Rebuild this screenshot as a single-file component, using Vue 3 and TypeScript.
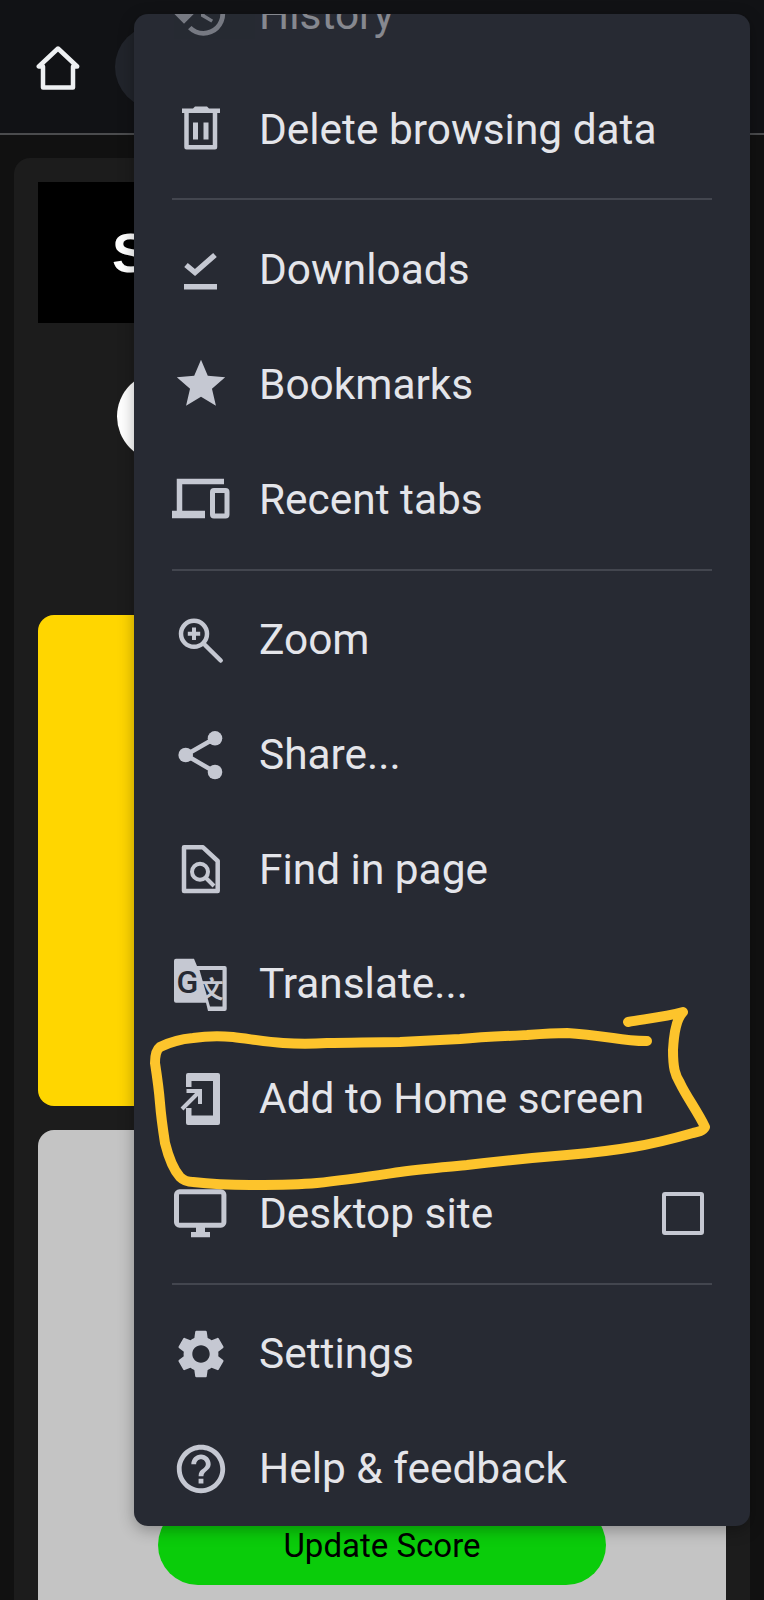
<template>
  <div class="screen">
    <header class="topbar">
      <svg class="home" width="44" height="44" viewBox="0 0 44 44">
        <path d="M22 2.5 2.8 20.5H7V41.5H37V20.5H41.2Z" fill="none" stroke="#eef0f2" stroke-width="4.5" stroke-linejoin="round" />
      </svg>
      <div class="address"></div>
    </header>

    <main class="page">
      <section class="panel">
        <div class="banner"><span>S</span></div>
        <div class="avatar-row"><div class="avatar"></div></div>
        <div class="yellow-card"></div>
        <div class="gray-card">
          <button class="update">Update Score</button>
        </div>
      </section>
    </main>

    <nav class="menu">
      <template v-for="item in items" :key="item.label">
        <div v-if="item.divider" class="divider"></div>
        <div class="row" :class="{ faded: item.faded }">
          <svg class="icon" width="58" height="58" :viewBox="item.box" v-html="item.icon"></svg>
          <span class="label">{{ item.label }}</span>
          <span v-if="item.check" class="check"></span>
        </div>
      </template>
    </nav>

    <svg class="scribble" width="764" height="1600" viewBox="0 0 764 1600">
      <path
        d="M628 1022 C645 1019 665 1017 683 1012 C677 1018 674 1030 673 1050 C673 1068 675 1075 680 1083 C686 1096 698 1112 705 1127 C703 1131 698 1132 693 1133 C672 1139 652 1144 633 1147 C610 1151 590 1153 567 1155 C530 1158 500 1161 467 1165 C445 1167 422 1169 400 1172 C372 1176 345 1180 317 1183 C295 1185 272 1185 250 1185 C230 1185 210 1184 193 1182 C185 1182 182 1179 180 1177 C172 1168 168 1155 165 1143 C163 1130 161 1116 160 1103 C159 1090 157 1076 155 1063 C155 1055 156 1050 160 1047 C170 1042 182 1039 193 1038 C207 1036 220 1036 233 1037 C250 1039 267 1042 283 1043 C298 1044 312 1044 327 1043 C350 1043 375 1042 400 1042 C420 1041 440 1040 460 1039 C482 1037 505 1036 527 1035 C540 1034 553 1033 567 1033 C582 1034 598 1036 613 1038 C625 1040 636 1041 647 1041"
        fill="none" stroke="#fdc42c" stroke-width="10" stroke-linecap="round" stroke-linejoin="round"
      />
    </svg>
  </div>
</template>

<script setup lang="ts">
interface MenuItem {
  label: string
  icon: string
  box: string
  divider?: boolean
  check?: boolean
  faded?: boolean
}

const items: MenuItem[] = [
  {
    label: 'History',
    box: '0 0 24 24',
    faded: true,
    icon: '<path fill="currentColor" d="M13 3a9 9 0 0 0-9 9H1l3.89 3.89.07.14L9 12H6c0-3.87 3.13-7 7-7s7 3.13 7 7-3.13 7-7 7c-1.93 0-3.68-.79-4.94-2.06l-1.42 1.42A8.954 8.954 0 0 0 13 21a9 9 0 0 0 0-18zm-1 5v5l4.28 2.54.72-1.21-3.5-2.08V8H12z"/>'
  },
  {
    label: 'Delete browsing data',
    box: '0 0 58 58',
    icon: '<path fill="currentColor" d="M10 8.5H21L23 6.5H35L37 8.5H48V13H10Z"/><path fill="none" stroke="currentColor" stroke-width="4.5" stroke-linejoin="round" d="M14.5 13V47.2H43V13"/><path fill="currentColor" d="M21 22.5H26V39.5H21ZM31.5 22.5H36.5V39.5H31.5Z"/>'
  },
  {
    label: 'Downloads',
    box: '0 0 58 58',
    divider: true,
    icon: '<path fill="none" stroke="currentColor" stroke-width="5.5" d="M14 24 23 31.5 43 14"/><path fill="currentColor" d="M12 43H45V48.5H12Z"/>'
  },
  {
    label: 'Bookmarks',
    box: '0 0 24 24',
    icon: '<path fill="currentColor" d="M12 17.27L18.18 21l-1.64-7.03L22 9.24l-7.19-.61L12 2 9.19 8.63 2 9.24l5.46 4.73L5.82 21z"/>'
  },
  {
    label: 'Recent tabs',
    box: '0 0 58 58',
    icon: '<path fill="none" stroke="currentColor" stroke-width="5.5" d="M52 11.5H7.5V42"/><path fill="currentColor" d="M0 40.7H33V48.3H0Z"/><rect x="40.5" y="20.5" width="14.5" height="25.5" rx="1.5" fill="none" stroke="currentColor" stroke-width="5"/>'
  },
  {
    label: 'Zoom',
    box: '0 0 58 58',
    divider: true,
    icon: '<circle cx="22" cy="22.8" r="13" fill="none" stroke="currentColor" stroke-width="4.5"/><path fill="none" stroke="currentColor" stroke-width="4.5" stroke-linecap="round" d="M33 34 48.7 49.5"/><path fill="none" stroke="currentColor" stroke-width="4" d="M22 16.5V29M15.8 22.8H28.2"/>'
  },
  {
    label: 'Share...',
    box: '0 0 58 58',
    icon: '<path fill="none" stroke="currentColor" stroke-width="4.5" d="M43 12.3 13.7 29 43 46"/><circle cx="43" cy="12.3" r="7.3" fill="currentColor"/><circle cx="13.7" cy="29" r="7.3" fill="currentColor"/><circle cx="43" cy="46" r="7.3" fill="currentColor"/>'
  },
  {
    label: 'Find in page',
    box: '0 0 58 58',
    icon: '<path fill="none" stroke="currentColor" stroke-width="4.5" stroke-linejoin="round" d="M12 7.3H31L45.7 21V51H12Z"/><circle cx="28" cy="31.7" r="8" fill="none" stroke="currentColor" stroke-width="4"/><path fill="none" stroke="currentColor" stroke-width="4" d="M33.5 37.5 42 46"/>'
  },
  {
    label: 'Translate...',
    box: '0 0 58 58',
    icon: '<path fill="currentColor" d="M28 11H52.7Q54.7 11 54.7 13V54Q54.7 56 52.7 56H36L34 47.7H4Q2 47.7 2 45.7V5.7Q2 3.7 4 3.7H22L25 11Z"/><path fill="#272a33" d="M27.5 15H50.5V51.5H38Z"/><text x="4.5" y="38" class="tr-g">G</text><text x="27.5" y="43" class="tr-x">文</text>'
  },
  {
    label: 'Add to Home screen',
    box: '0 0 58 58',
    icon: '<path fill="currentColor" d="M14 5Q14 3 16 3H46Q48 3 48 5V53Q48 55 46 55H16Q14 55 14 53V38H19.5V45.5H41V11H19.5V17H14Z"/><path fill="none" stroke="currentColor" stroke-width="4" d="M10 39 27 22M14.5 21H28V34"/>'
  },
  {
    label: 'Desktop site',
    box: '0 0 58 58',
    check: true,
    icon: '<rect x="4.5" y="7.8" width="47.4" height="33.4" rx="3" fill="none" stroke="currentColor" stroke-width="5"/><path fill="currentColor" d="M24 43H33V48H38V53.3H19V48H24Z"/>'
  },
  {
    label: 'Settings',
    box: '0 0 24 24',
    divider: true,
    icon: '<path fill="currentColor" d="M19.14 12.94c.04-.3.06-.61.06-.94 0-.32-.02-.64-.07-.94l2.03-1.58c.18-.14.23-.41.12-.61l-1.92-3.32c-.12-.22-.37-.29-.59-.22l-2.39.96c-.5-.38-1.03-.7-1.62-.94l-.36-2.54c-.04-.24-.24-.41-.48-.41h-3.84c-.24 0-.43.17-.47.41l-.36 2.54c-.59.24-1.13.57-1.62.94l-2.39-.96c-.22-.08-.47 0-.59.22L2.74 8.87c-.12.21-.08.47.12.61l2.03 1.58c-.05.3-.09.63-.09.94s.02.64.07.94l-2.03 1.58c-.18.14-.23.41-.12.61l1.92 3.32c.12.22.37.29.59.22l2.39-.96c.5.38 1.03.7 1.62.94l.36 2.54c.05.24.24.41.48.41h3.84c.24 0 .44-.17.47-.41l.36-2.54c.59-.24 1.13-.56 1.62-.94l2.39.96c.22.08.47 0 .59-.22l1.92-3.32c.12-.22.07-.47-.12-.61l-2.01-1.58zM12 15.6c-1.98 0-3.6-1.62-3.6-3.6s1.62-3.6 3.6-3.6 3.6 1.62 3.6 3.6-1.62 3.6-3.6 3.6z"/>'
  },
  {
    label: 'Help & feedback',
    box: '0 0 24 24',
    icon: '<path fill="currentColor" d="M11 18h2v-2h-2v2zm1-16C6.48 2 2 6.48 2 12s4.48 10 10 10 10-4.48 10-10S17.52 2 12 2zm0 18c-4.41 0-8-3.59-8-8s3.59-8 8-8 8 3.59 8 8-3.59 8-8 8zm0-14c-2.21 0-4 1.79-4 4h2c0-1.1.9-2 2-2s2 .9 2 2c0 2-3 1.75-3 5h2c0-2.25 3-2.5 3-5 0-2.21-1.79-4-4-4z"/>'
  }
]
</script>

<style>
html,
body {
  background: #111111;
}
</style>

<style scoped>
.screen {
  position: relative;
  width: 764px;
  height: 1600px;
  overflow: hidden;
  background: #111111;
  font-family: Roboto, 'Liberation Sans', sans-serif;
}

.topbar {
  height: 135px;
  box-sizing: border-box;
  display: flex;
  align-items: center;
  gap: 35px;
  padding: 0 0 0 36px;
  background: #111215;
  border-bottom: 2px solid #4b4c4e;
}

.home {
  margin-top: 2px;
  flex: none;
}

.address {
  width: 560px;
  height: 84px;
  border-radius: 42px;
  background: #21242b;
  flex: none;
}

.page {
  padding: 23px 14px 0;
}

.panel {
  width: 736px;
  box-sizing: border-box;
  padding: 24px 24px 0;
  border-radius: 16px 16px 0 0;
  background: #1c1c1c;
}

.banner {
  height: 141px;
  display: flex;
  align-items: center;
  padding-left: 74px;
  background: #000000;
  color: #ffffff;
  font-family: 'Liberation Sans', sans-serif;
  font-size: 56px;
  font-weight: 700;
}

.avatar-row {
  height: 292px;
  box-sizing: border-box;
  padding: 49px 0 0 79px;
}

.avatar {
  width: 89px;
  height: 89px;
  border-radius: 50%;
  background: #ffffff;
}

.yellow-card {
  height: 491px;
  border-radius: 16px;
  background: #ffd600;
}

.gray-card {
  height: 470px;
  margin-top: 24px;
  padding-top: 375px;
  box-sizing: border-box;
  border-radius: 16px 16px 0 0;
  background: #c4c4c4;
}

.update {
  display: block;
  width: 448px;
  height: 80px;
  margin: 0 0 0 120px;
  border: 0;
  border-radius: 40px;
  background: #0acc0a;
  color: #000000;
  font-family: Roboto, sans-serif;
  font-size: 33px;
}

.menu {
  position: absolute;
  left: 134px;
  top: 14px;
  width: 616px;
  height: 1512px;
  display: flex;
  flex-direction: column;
  justify-content: flex-end;
  overflow: hidden;
  border-radius: 14px;
  background: #272a33;
  box-shadow: 0 4px 16px rgba(0, 0, 0, 0.3);
}

.row {
  flex: none;
  height: 114.7px;
  display: flex;
  align-items: center;
  padding: 0 46px 0 38px;
  color: #c5c8d2;
}

.row.faded {
  opacity: 0.5;
}

.icon {
  flex: none;
  margin-right: 29px;
}

.icon :deep(.tr-g) {
  fill: #272a33;
  font-family: Roboto, sans-serif;
  font-size: 32px;
  font-weight: 500;
}

.icon :deep(.tr-x) {
  fill: currentColor;
  font-family: 'Noto Sans CJK SC', sans-serif;
  font-size: 24px;
  font-weight: 700;
}

.label {
  flex: 1;
  color: #e4e5ea;
  font-size: 42.4px;
  white-space: nowrap;
}

.check {
  width: 42.5px;
  height: 42.5px;
  box-sizing: border-box;
  border: 4.5px solid #c5c8d2;
  border-radius: 3px;
  flex: none;
}

.divider {
  flex: none;
  height: 2px;
  margin: 12px 38px 12px;
  background: #43464f;
}

.scribble {
  position: absolute;
  left: 0;
  top: 0;
  pointer-events: none;
}
</style>
